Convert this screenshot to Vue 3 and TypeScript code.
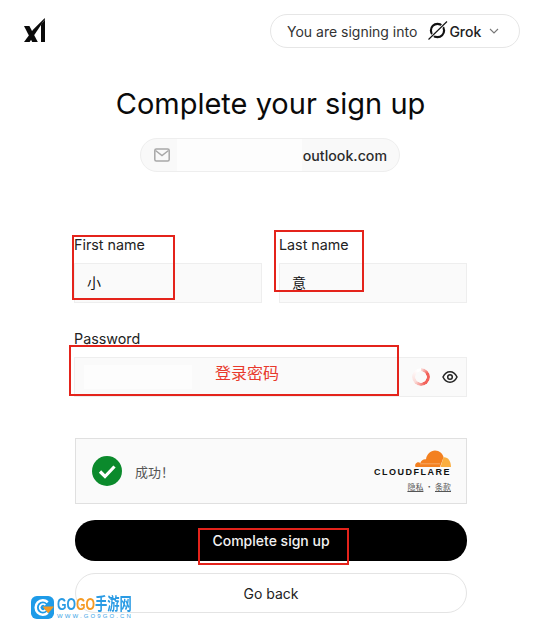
<script setup lang="ts">
import { ref } from 'vue';

const firstName = ref('小');
const lastName = ref('意');

// red marks drawn over the shot
const marks = [
  { left: 72, top: 235, width: 103, height: 65 },
  { left: 274, top: 230, width: 90, height: 62 },
  { left: 69, top: 345, width: 330, height: 51 },
  { left: 198, top: 528, width: 151, height: 37 },
];
</script>

<template>
  <div class="page">
    <header class="top">
      <svg class="logo" viewBox="0 0 21 24" aria-label="xAI">
        <path d="M0 8h5.4l8.4 16H8.2z" />
        <path d="M20.8 0v1.2L5.6 24H0l9-12.2z" />
        <path d="M17 6.5l4-5V24h-4z" />
      </svg>
      <button class="app-pill">
        <span>You are signing into</span>
        <svg class="grok" viewBox="0 0 20 20">
          <circle cx="9.500" cy="9.500" r="6.600" fill="none" stroke="#111" stroke-width="2.200" />
          <path d="M19 .5L.5 18.500" stroke="#fff" stroke-width="3" />
          <path d="M19 .5L.5 18.500" stroke="#111" stroke-width="1.100" />
        </svg>
        <b>Grok</b>
        <svg class="chev" viewBox="0 0 10 6"><path d="M1 1l4 4 4-4" fill="none" stroke="#777" stroke-width="1.100" /></svg>
      </button>
    </header>

    <h1>Complete your sign up</h1>

    <div class="email">
      <svg class="mail" viewBox="0 0 16 14">
        <rect x=".8" y="1" width="14.400" height="12" rx="1.500" fill="none" stroke="#a8a8a8" stroke-width="1.500" />
        <path d="M1.500 2.500L8 7.600l6.500-5.100" fill="none" stroke="#a8a8a8" stroke-width="1.500" />
      </svg>
      <div class="email-hidden"></div>
      <div class="email-value">outlook.com</div>
    </div>

    <form class="form" @submit.prevent>
      <div class="names">
        <label class="field">
          <span class="label">First name</span>
          <input v-model="firstName" class="input" />
        </label>
        <label class="field">
          <span class="label">Last name</span>
          <input v-model="lastName" class="input" />
        </label>
      </div>

      <div class="field pass-field">
        <span class="label">Password</span>
        <div class="input pass">
          <div class="pass-value"></div>
          <span class="hint">登录密码</span>
          <span class="spin"></span>
          <svg class="eye" viewBox="0 0 16 14">
            <path d="M1 7c1.600-3.400 4-5.200 7-5.200S13.400 3.600 15 7c-1.600 3.400-4 5.200-7 5.200S2.600 10.400 1 7z" fill="none" stroke="#222" stroke-width="1.500" />
            <circle cx="8" cy="7" r="2.300" fill="none" stroke="#222" stroke-width="1.500" />
          </svg>
        </div>
      </div>

      <div class="captcha">
        <svg class="ok" viewBox="0 0 30 30">
          <circle cx="15" cy="15" r="15" fill="#0b8a2c" />
          <path d="M8 15.500l5 5 9.500-10" fill="none" stroke="#fff" stroke-width="3.200" />
        </svg>
        <span class="ok-text">成功！</span>
        <div class="cf">
          <svg class="cloud" viewBox="0 0 37 17">
            <path d="M26 17H1.500c-.8-1.800-.2-3.500 1.300-4.300 1.200-.6 2.500-.4 3.500.2C7.500 10 9.500 8.800 12 9.200 12.800 4 16.500.5 21 .5c4.400 0 7.800 3 8.600 6.800z" fill="#f38020" />
            <path d="M29.500 7.300C34 6.800 37 11 37 17H26.500c1-3 2.200-6.700 3-9.700z" fill="#faae40" />
            <path d="M6 13.800h20" stroke="#fff" stroke-width=".5" opacity=".6" />
          </svg>
          <div class="cf-name">CLOUDFLARE</div>
          <div class="cf-links"><u>隐私</u> · <u>条款</u></div>
        </div>
      </div>

      <button class="btn primary">Complete sign up</button>
      <button class="btn ghost">Go back</button>
    </form>

    <div
      v-for="(m, i) in marks"
      :key="i"
      class="mark"
      :style="{ left: m.left + 'px', top: m.top + 'px', width: m.width + 'px', height: m.height + 'px' }"
    ></div>

    <!-- watermark -->
    <div class="wm">
      <svg class="wm-icon" viewBox="0 0 24 24">
        <rect width="24" height="24" rx="6" fill="#1e9be8" />
        <path d="M17.500 6.500A7.500 7.500 0 1 0 17.500 17.500" fill="none" stroke="#fff" stroke-width="2.600" />
        <path d="M15 9.500a3.500 3.500 0 1 0 0 5" fill="none" stroke="#fff" stroke-width="1.800" />
        <path d="M12 11h12l-6 7z" fill="#f59a23" />
      </svg>
      <div class="wm-text">
        <div class="wm-name"><span>GO</span><span class="wm-orange">GO</span><span>手游网</span></div>
        <div class="wm-url">WWW.GO9GO.CN</div>
      </div>
    </div>
  </div>
</template>

<style>
html,
body {
  margin: 0;
  background: #fff;
  overflow: hidden;
}
</style>

<style scoped>
.page {
  position: relative;
  width: 534px;
  height: 629px;
  overflow: hidden;
  background: #fff;
  color: #1c1c1c;
  font-family: Inter, "Noto Sans CJK SC", sans-serif;
}

.top {
  display: flex;
  justify-content: space-between;
  align-items: flex-start;
  padding: 14px 14px 0 24px;
}
.logo {
  width: 21px;
  height: 24px;
  margin-top: 4px;
  fill: #0a0a0a;
}
.app-pill {
  display: flex;
  align-items: center;
  width: 250px;
  height: 34px;
  padding: 0 0 0 16px;
  border: 1.5px solid #e6e6e6;
  border-radius: 17px;
  background: #fff;
  color: #333;
  font: 14px Inter, sans-serif;
}
.grok {
  width: 20px;
  height: 20px;
  margin-left: 11px;
}
.app-pill b {
  margin-left: 1px;
  font-weight: 500;
  font-size: 14px;
  color: #222;
}
.chev {
  width: 10px;
  height: 6px;
  margin-left: 8px;
}

h1 {
  margin: 38px 0 0;
  width: 541px;
  text-align: center;
  font-size: 29px;
  line-height: 36px;
  font-weight: 400;
  color: #0a0a0a;
}

.email {
  display: flex;
  align-items: center;
  box-sizing: border-box;
  width: 260px;
  height: 34px;
  margin: 16px 0 0 140px;
  border: 1px solid #eeeeee;
  border-radius: 17px;
  background: #f9f9f9;
}
.mail {
  width: 16px;
  height: 14px;
  margin-left: 13px;
}
.email-hidden {
  flex: 1;
  height: 32px;
  margin-left: 7px;
  background: #fdfdfd;
}
.email-value {
  padding: 0 12px 0 1px;
  font-size: 14.200px;
  font-weight: 500;
  color: #2c2c2c;
}

.form {
  display: flex;
  flex-direction: column;
  width: 393px;
  margin: 63px 0 0 74px;
}
.names {
  display: grid;
  grid-template-columns: 188px 188px;
  column-gap: 17px;
}
.field {
  display: block;
}
.label {
  display: block;
  height: 20px;
  margin-bottom: 8px;
  line-height: 20px;
  font-size: 14.300px;
  color: #222;
}
.input {
  display: block;
  box-sizing: border-box;
  width: 100%;
  height: 40px;
  padding: 0 12px 2px;
  border: 1px solid #eeeeee;
  border-radius: 0;
  outline: none;
  background: #fafafa;
  color: #111;
  font: 14px "Noto Sans CJK SC", sans-serif;
}
.pass-field {
  margin-top: 26px;
}
.pass {
  display: flex;
  align-items: center;
  padding: 0;
}
.pass-value {
  width: 108px;
  height: 24px;
  margin-left: 9px;
  background: #fdfdfd;
}
.hint {
  margin: 0 0 10px 23px;
  color: #e8392c;
  font-size: 16px;
}
.spin {
  width: 18px;
  height: 18px;
  margin-left: 133px;
  border-radius: 50%;
  background: conic-gradient(#fbe3e1 0deg, #f2625a 60deg, #f2625a 150deg, #fadcd9 230deg, #fff 330deg);
  -webkit-mask: radial-gradient(circle, transparent 5.500px, #000 6px);
  mask: radial-gradient(circle, transparent 5.500px, #000 6px);
}
.eye {
  width: 16px;
  height: 14px;
  margin-left: 12px;
}

.captcha {
  display: flex;
  align-items: center;
  box-sizing: border-box;
  width: 392px;
  height: 66px;
  margin: 41px 0 0 1px;
  padding: 0 15px 0 16px;
  border: 1px solid #e0e0e0;
  background: #fafafa;
}
.ok {
  width: 30px;
  height: 30px;
}
.ok-text {
  margin-left: 13px;
  font: 13px "Noto Sans CJK SC", sans-serif;
  color: #555;
}
.cf {
  display: flex;
  flex-direction: column;
  align-items: flex-end;
  margin-left: auto;
}
.cloud {
  width: 37px;
  height: 17px;
}
.cf-name {
  font: 700 9px/11px "Liberation Sans", sans-serif;
  letter-spacing: 1.500px;
  color: #111;
}
.cf-links {
  margin-top: 4px;
  font: 8px/10px "Noto Sans CJK SC", sans-serif;
  color: #555;
}

.btn {
  display: block;
  box-sizing: border-box;
  width: 392px;
  margin-left: 1px;
  border-radius: 20px;
  font: 14px Inter, sans-serif;
}
.primary {
  height: 41px;
  margin-top: 16px;
  padding-bottom: 2px;
  border: none;
  background: #000;
  color: #f2f2f2;
  font-weight: 500;
}
.ghost {
  height: 40px;
  margin-top: 12px;
  border: 1px solid #e4e4e4;
  background: #fff;
  color: #222;
}

.mark {
  position: absolute;
  box-sizing: border-box;
  border: 2px solid #e4231b;
}

.wm {
  position: absolute;
  left: 31px;
  top: 596px;
  display: flex;
  gap: 3px;
}
.wm-icon {
  width: 23px;
  height: 23px;
}
.wm-name {
  font: 700 17px/17px "Liberation Sans", "Noto Sans CJK SC", sans-serif;
  color: #2a9be4;
  white-space: nowrap;
  transform: scaleX(0.72);
  transform-origin: left center;
}
.wm-orange {
  color: #f59a23;
}
.wm-url {
  font: 6px/7px "Liberation Sans", sans-serif;
  letter-spacing: 2.100px;
  color: #3aa4e6;
  white-space: nowrap;
}
</style>
